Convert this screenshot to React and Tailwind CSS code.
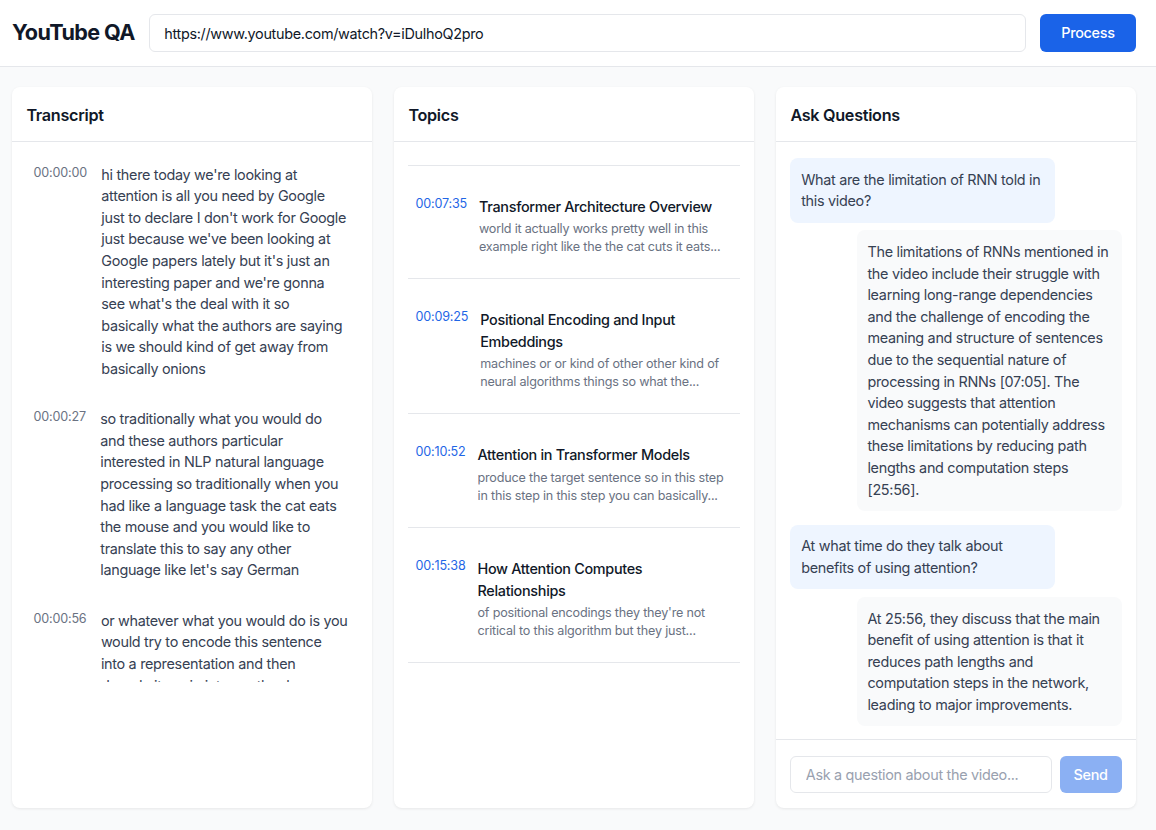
import React, { useState } from 'react';

const transcript = [
  {
    t: '00:00:00',
    text: "hi there today we're looking at attention is all you need by Google just to declare I don't work for Google just because we've been looking at Google papers lately but it's just an interesting paper and we're gonna see what's the deal with it so basically what the authors are saying is we should kind of get away from basically onions",
  },
  {
    t: '00:00:27',
    text: 'so traditionally what you would do and these authors particular interested in NLP natural language processing so traditionally when you had like a language task the cat eats the mouse and you would like to translate this to say any other language like let\'s say German',
  },
  {
    t: '00:00:56',
    text: 'or whatever what you would do is you would try to encode this sentence into a representation and then decode\u00A0it again into another language',
  },
];

const topics = [
  {
    t: '00:04:12',
    title: 'Limitations of Recurrent Networks',
    desc: 'the information has to travel a long way to get to the end of the sentence so you...',
  },
  {
    t: '00:07:35',
    title: 'Transformer Architecture Overview',
    desc: 'world it actually works pretty well in this example right like the the cat cuts it eats...',
  },
  {
    t: '00:09:25',
    title: 'Positional Encoding and Input Embeddings',
    desc: 'machines or or kind of other other kind of neural algorithms things so what the...',
  },
  {
    t: '00:10:52',
    title: 'Attention in Transformer Models',
    desc: 'produce the target sentence so in this step in this step in this step you can basically...',
  },
  {
    t: '00:15:38',
    title: 'How Attention Computes Relationships',
    desc: "of positional encodings they they're not critical to this algorithm but they just...",
  },
];

const messages = [
  { q: 'What are the limitation of RNN told in this video?', a: 'The limitations of RNNs mentioned in the video include their struggle with learning long-range dependencies and the challenge of encoding the meaning and structure of sentences due to the sequential nature of processing in RNNs [07:05]. The video suggests that attention mechanisms can potentially address these limitations by reducing path lengths and computation steps [25:56].' },
  { q: 'At what time do they talk about benefits of using attention?', a: 'At 25:56, they discuss that the main benefit of using attention is that it reduces path lengths and computation steps in the network, leading to major improvements.' },
];

function Panel({ title, children }) {
  return (
    <div className="w-[360px] h-[721px] bg-white rounded-lg shadow-[0_1px_3px_rgba(0,0,0,0.08)] flex flex-col overflow-hidden">
      <div className="h-[55px] px-[14.4px] pt-1 flex items-center border-b border-gray-200 shrink-0">
        <h2 className="text-[16.2px] font-semibold text-gray-900 tracking-[-0.3px]">{title}</h2>
      </div>
      {children}
    </div>
  );
}

export default function App() {
  const [url, setUrl] = useState('https://www.youtube.com/watch?v=iDulhoQ2pro');
  const [question, setQuestion] = useState('');

  return (
    <div className="min-h-[830px] bg-gray-50 font-['Inter','Noto_Sans',sans-serif] text-[14.4px] leading-[21.6px] tracking-[-0.3px]">
      <header className="h-[67px] bg-white border-b border-gray-200 flex items-center gap-[14px] pl-3 pr-5">
        <h1 className="text-[21.6px] font-bold text-gray-900 tracking-[-0.6px]">YouTube QA</h1>
        <input
          value={url}
          onChange={(e) => setUrl(e.target.value)}
          className="flex-1 h-[38px] border border-gray-200 rounded-md px-[14.4px] text-gray-900 outline-none tracking-[-0.3px]"
        />
        <button className="h-[38px] w-[96px] bg-[#1a63e8] text-white rounded-md font-medium tracking-[-0.3px]">Process</button>
      </header>

      <main className="flex gap-[22px] pl-3 pr-5 pt-5 pb-[22px]">
        <Panel title="Transcript">
          <div className="h-[540px] overflow-hidden p-[7.2px]">
            {transcript.map((row) => (
              <div key={row.t} className="flex items-start gap-[14.4px] p-[14.4px]">
                <span className="shrink-0 text-[12.6px] leading-[18px] text-gray-500 tracking-[-0.2px]">{row.t}</span>
                <p className="text-gray-700 pr-[1.5px]">{row.text}</p>
              </div>
            ))}
          </div>
        </Panel>

        <Panel title="Topics">
          <div className="h-[540px] overflow-hidden px-[14.4px]">
            <div className="-mt-[90px]">
              {topics.map((tp) => (
                <div key={tp.t} className="flex items-start gap-3 px-[7.2px] pt-[30px] pb-[22px] border-b border-gray-200">
                  <span className="shrink-0 text-[12.6px] leading-[15px] text-[#1f66e6] tracking-[-0.2px]">{tp.t}</span>
                  <div className="min-w-0">
                    <div className="font-medium text-gray-900 leading-[21.6px]">{tp.title}</div>
                    <p className="mt-[3px] text-[12.6px] leading-[18px] text-gray-500 line-clamp-2 tracking-[-0.2px]">{tp.desc}</p>
                  </div>
                </div>
              ))}
            </div>
          </div>
        </Panel>

        <Panel title="Ask Questions">
          <div className="flex-1 overflow-hidden px-[14.4px] pt-4">
            {messages.map((m, i) => (
              <div key={i} className={i > 0 ? 'mt-[13.5px]' : ''}>
                <div className="max-w-[80%] bg-[#eef5ff] rounded-lg px-[10.8px] py-[10.8px] text-gray-700 w-fit">{m.q}</div>
                <div className="flex justify-end mt-[7.5px]">
                  <div className="max-w-[80%] bg-gray-50 rounded-lg px-[10.8px] py-[10.8px] text-gray-700">{m.a}</div>
                </div>
              </div>
            ))}
          </div>
          <div className="border-t border-gray-200 px-[14.4px] pt-4 pb-[15px] flex gap-2 shrink-0">
            <input
              value={question}
              onChange={(e) => setQuestion(e.target.value)}
              placeholder="Ask a question about the video..."
              className="flex-1 min-w-0 h-[37px] border border-gray-200 rounded-md px-[14.4px] text-gray-900 placeholder:text-gray-400 outline-none tracking-[-0.3px]"
            />
            <button className="w-[62px] h-[37px] bg-[#8bb0f3] text-white rounded-md font-medium tracking-[-0.3px]">Send</button>
          </div>
        </Panel>
      </main>
    </div>
  );
}
